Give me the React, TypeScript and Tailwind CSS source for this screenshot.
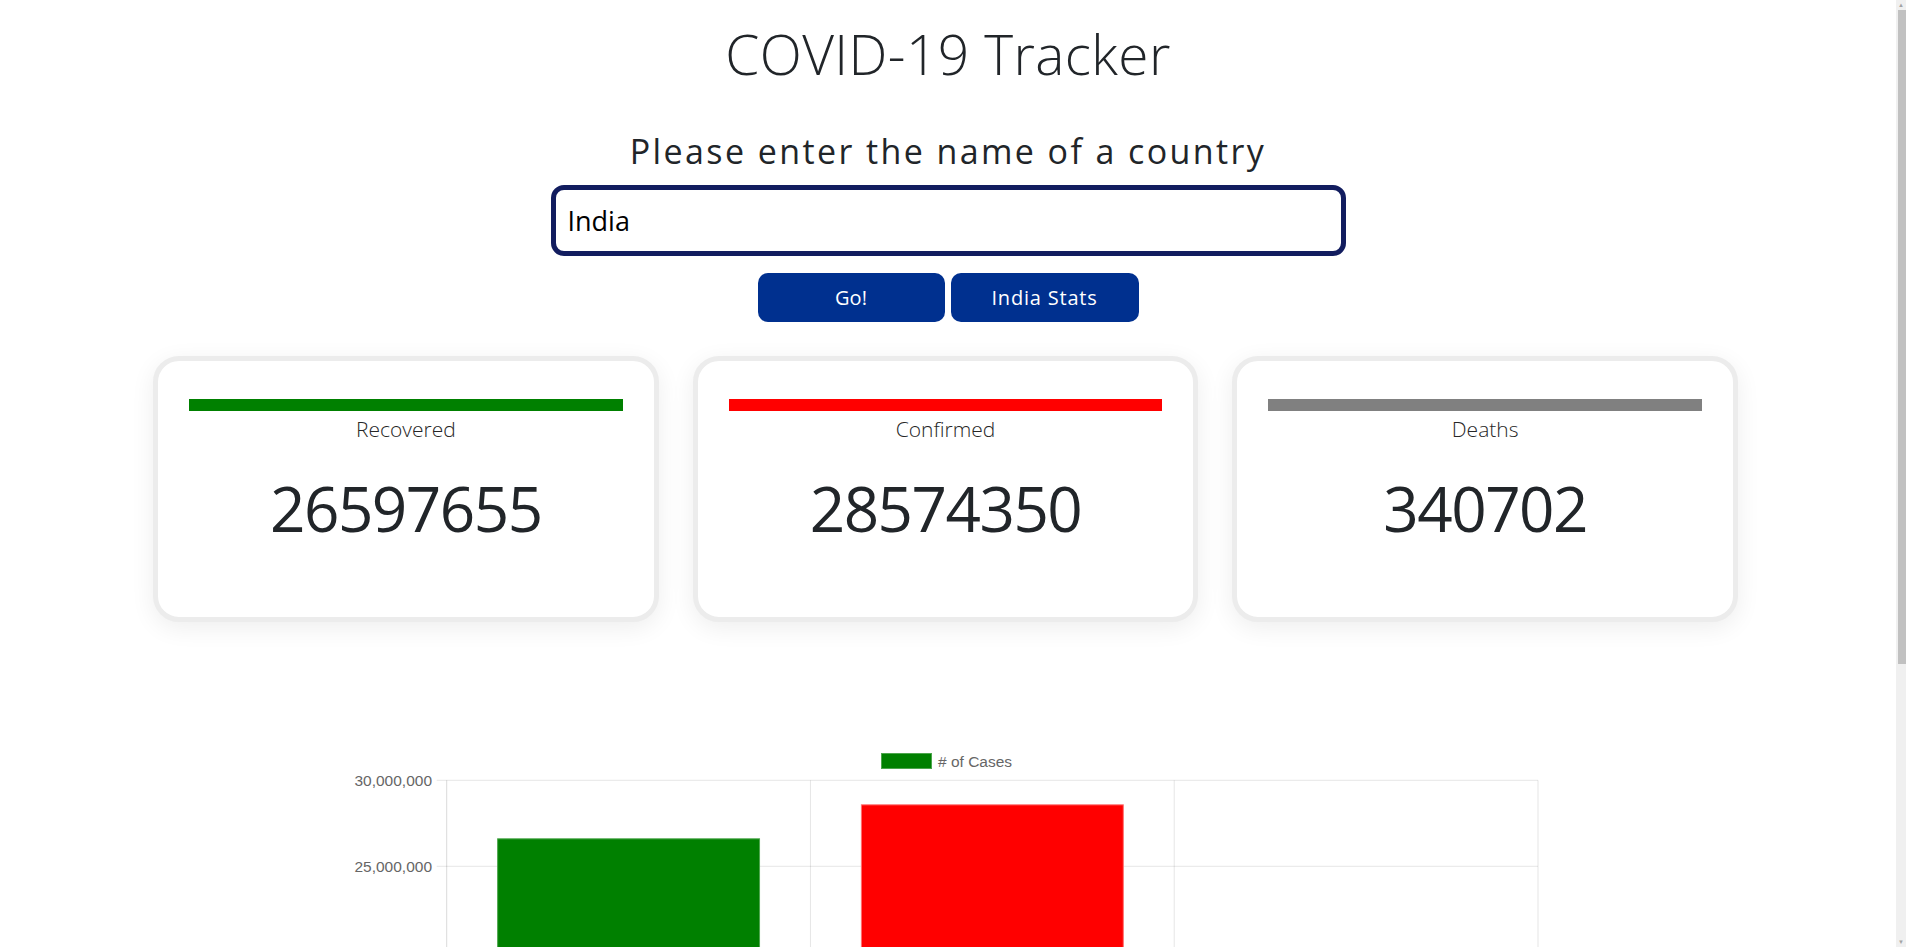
import React from "react";

const stats = [
  { label: "Recovered", value: 26597655, bar: "bg-[#008000]" },
  { label: "Confirmed", value: 28574350, bar: "bg-[#ff0000]" },
  { label: "Deaths", value: 340702, bar: "bg-[#808080]" },
];

// chart geometry (svg units = px)
const PLOT_LEFT = 118.7;
const PLOT_RIGHT = 1210;
const ZERO_Y = 555.3;
const PX_PER_MILLION = 17.2;
const TICKS = [30, 25, 20, 15, 10, 5, 0];
const barColors = [
  { fill: "#008000", stroke: "#4ca64c" },
  { fill: "#ff0000", stroke: "#ff7070" },
  { fill: "#808080", stroke: "#a6a6a6" },
];
const chartFont = "'Liberation Sans', Arial, sans-serif";

function fmt(n: number) {
  return n.toLocaleString("en-US");
}

function CasesChart() {
  const catW = (PLOT_RIGHT - PLOT_LEFT) / stats.length;
  const barW = catW * 0.72;
  return (
    <svg width="1240" height="600" viewBox="0 0 1240 600" className="block mx-auto">
      {/* legend */}
      <rect x="553.5" y="12.5" width="50" height="15" fill="#008000" stroke="#4ca64c" strokeWidth="1" />
      <text x="610" y="25.5" fontSize="15.5" fill="#666" fontFamily={chartFont}>
        # of Cases
      </text>

      {/* horizontal grid + y labels */}
      {TICKS.map((t) => {
        const y = ZERO_Y - t * PX_PER_MILLION;
        return (
          <g key={t}>
            <line x1="108.7" x2={PLOT_RIGHT} y1={y} y2={y} stroke="rgba(0,0,0,0.1)" strokeWidth="1" />
            <text x="104" y={y + 5.5} textAnchor="end" fontSize="15.5" fill="#666" fontFamily={chartFont}>
              {fmt(t * 1000000)}
            </text>
          </g>
        );
      })}

      {/* vertical grid */}
      {[0, 1, 2, 3].map((i) => {
        const x = PLOT_LEFT + i * catW;
        return (
          <line
            key={i}
            x1={x}
            x2={x}
            y1={ZERO_Y - 30 * PX_PER_MILLION}
            y2={ZERO_Y + 10}
            stroke={i === 0 ? "rgba(0,0,0,0.15)" : "rgba(0,0,0,0.1)"}
            strokeWidth="1"
          />
        );
      })}

      {/* bars */}
      {stats.map((s, i) => {
        const cx = PLOT_LEFT + catW * (i + 0.5);
        const h = (s.value / 1000000) * PX_PER_MILLION;
        return (
          <rect
            key={s.label}
            x={cx - barW / 2}
            y={ZERO_Y - h}
            width={barW}
            height={h}
            fill={barColors[i].fill}
            stroke={barColors[i].stroke}
            strokeWidth="1"
          />
        );
      })}

      {/* x labels */}
      {stats.map((s, i) => (
        <text
          key={s.label}
          x={PLOT_LEFT + catW * (i + 0.5)}
          y={ZERO_Y + 30}
          textAnchor="middle"
          fontSize="15.5"
          fill="#666"
          fontFamily={chartFont}
        >
          {s.label}
        </text>
      ))}
    </svg>
  );
}

function StatCard({ label, value, bar }: { label: string; value: number; bar: string }) {
  return (
    <div className="h-[266px] rounded-[26px] border-[5px] border-[#ececec] bg-white px-[31px] pt-[38px] shadow-[0_6px_24px_rgba(0,0,0,0.07)] flex flex-col items-center">
      <div className={`h-[12px] w-full ${bar}`} />
      <p className="mt-[8px] text-[21px] leading-none font-light text-[#262626]">{label}</p>
      <p className="mt-[37px] text-[62px] leading-none font-normal tracking-[-1.5px] text-[#212529]">{value}</p>
    </div>
  );
}

export default function App() {
  return (
    <div className="flex h-screen bg-white font-['Open_Sans',sans-serif]">
      <main className="flex-1 overflow-y-auto [scrollbar-width:none]">
        <div className="flex flex-col items-center pt-[26px]">
          <h1 className="text-[55px] leading-none font-light tracking-[0.4px] text-[#212529]">COVID-19 Tracker</h1>
          <h2 className="mt-[53px] text-[34px] leading-none font-normal tracking-[2.4px] text-[#212529]">
            Please enter the name of a country
          </h2>
          <input
            type="text"
            defaultValue="India"
            className="mt-[17px] h-[71px] w-[795px] rounded-[13px] border-[5px] border-[#121d5f] bg-white pl-[12px] text-[27px] font-normal text-black outline-none"
          />
          <div className="mt-[17px] flex gap-[6px]">
            <button className="h-[49px] w-[187px] rounded-[10px] bg-[#00308f] text-[20px] text-white">Go!</button>
            <button className="h-[49px] w-[188px] rounded-[10px] bg-[#00308f] text-[20px] tracking-[0.8px] text-white">
              India Stats
            </button>
          </div>
        </div>

        <div className="mx-auto mt-[34px] grid w-[1590px] grid-cols-3 gap-[34px] pr-[5px]">
          {stats.map((s) => (
            <StatCard key={s.label} {...s} />
          ))}
        </div>

        <div className="mt-[119px]">
          <CasesChart />
        </div>
      </main>

      {/* window scrollbar */}
      <aside className="flex w-[10px] flex-col bg-[#f0f0f0]">
        <div className="h-[10px] text-[6px] leading-[10px] text-center text-[#a3a3a3]">▲</div>
        <div className="ml-[2px] h-[654px] w-[8px] bg-[#c1c1c1]" />
        <div className="flex-1" />
        <div className="h-[10px] text-[6px] leading-[10px] text-center text-[#a3a3a3]">▼</div>
      </aside>
    </div>
  );
}
